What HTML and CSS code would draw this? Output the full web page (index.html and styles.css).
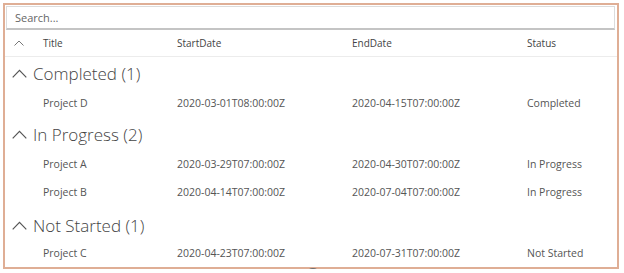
FILE: index.html
```html
<!DOCTYPE html>
<html>
<head>
<meta charset="utf-8">
<link rel="stylesheet" href="styles.css">
</head>
<body>
<div class="frame">
  <div class="search">Search...</div>
  <div class="row head">
    <span class="chev-cell"><svg width="10" height="6" viewBox="0 0 10 6"><polyline points="0.5,5.5 5,1 9.5,5.5" fill="none" stroke="#777" stroke-width="1"/></svg></span>
    <span>Title</span><span>StartDate</span><span>EndDate</span><span>Status</span>
  </div>
  <div class="group"><svg width="15" height="9" viewBox="0 0 15 9"><polyline points="0.7,8.3 7.5,1.3 14.3,8.3" fill="none" stroke="#555" stroke-width="1.2"/></svg><span>Completed (1)</span></div>
  <div class="row"><span></span><span>Project D</span><span>2020-03-01T08:00:00Z</span><span>2020-04-15T07:00:00Z</span><span>Completed</span></div>
  <div class="group"><svg width="15" height="9" viewBox="0 0 15 9"><polyline points="0.7,8.3 7.5,1.3 14.3,8.3" fill="none" stroke="#555" stroke-width="1.2"/></svg><span>In Progress (2)</span></div>
  <div class="row"><span></span><span>Project A</span><span>2020-03-29T07:00:00Z</span><span>2020-04-30T07:00:00Z</span><span>In Progress</span></div>
  <div class="row"><span></span><span>Project B</span><span>2020-04-14T07:00:00Z</span><span>2020-07-04T07:00:00Z</span><span>In Progress</span></div>
  <div class="group tall"><svg width="15" height="9" viewBox="0 0 15 9"><polyline points="0.7,8.3 7.5,1.3 14.3,8.3" fill="none" stroke="#555" stroke-width="1.2"/></svg><span>Not Started (1)</span></div>
  <div class="row"><span></span><span>Project C</span><span>2020-04-23T07:00:00Z</span><span>2020-07-31T07:00:00Z</span><span>Not Started</span></div>
  <div class="handle"></div>
</div>
</body>
</html>
```
FILE: styles.css
```css
html, body { margin: 0; padding: 0; background: #fff; }
body { font-family: "Open Sans", "Noto Sans", sans-serif; color: #555; overflow: hidden; }
.frame {
  position: relative;
  margin: 3px 0 0 3px;
  width: 612px;
  height: 262px;
  border: 2px solid #dfae95;
  box-sizing: content-box;
}
.search {
  margin: 1px 2px 0 1px;
  height: 21px;
  border: 1px solid #dcdcdc;
  border-bottom: 2px solid #c4c4c4;
  font-size: 11px;
  line-height: 21px;
  padding-left: 8px;
  color: #666;
}
.row {
  display: grid;
  grid-template-columns: 38px 134px 175px 175px 1fr;
  height: 28px;
  box-sizing: border-box;
  padding-bottom: 3px;
  align-items: center;
  font-size: 10.5px;
  color: #555;
}
.row.head {
  height: 27px;
  padding-bottom: 0;
  font-size: 10px;
  border-bottom: 1px solid #ececec;
  color: #444;
}
.chev-cell { display: flex; padding-left: 9px; }
.group {
  display: flex;
  align-items: center;
  height: 33px;
  box-sizing: border-box;
  padding-left: 7px;
  gap: 6px;
  font-size: 17px;
  font-weight: 300;
  color: #444;
}
.group.tall { padding-top: 4px; }
.group svg { margin-top: -1px; }
.handle {
  position: absolute;
  left: 300px;
  top: 263px;
  width: 16px;
  height: 8px;
  border-radius: 8px 8px 0 0;
  background: #6f6f6f;
}
```
